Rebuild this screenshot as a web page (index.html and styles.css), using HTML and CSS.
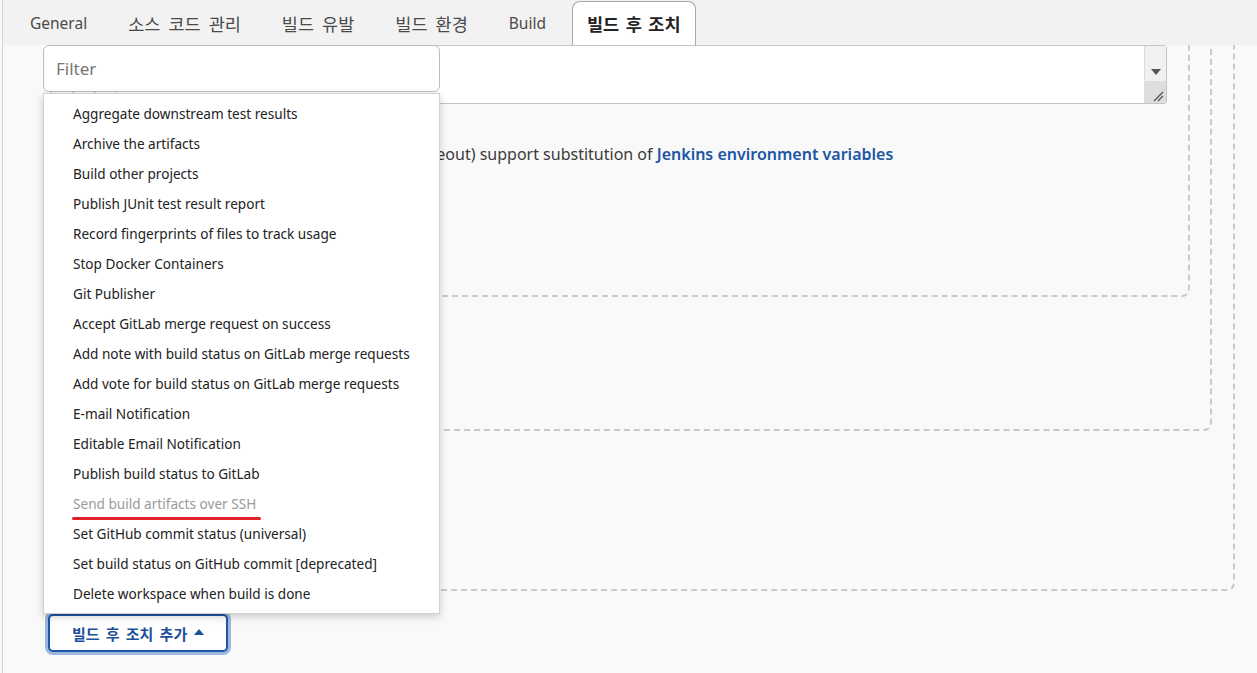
FILE: index.html
```html
<!DOCTYPE html>
<html lang="ko">
<head>
<meta charset="utf-8">
<title>Jenkins - 빌드 후 조치</title>
<link rel="stylesheet" href="styles.css">
</head>
<body>
<div class="page">
  <nav class="tabs">
    <span class="tab lat">General</span>
    <span class="tab">소스 코드 관리</span>
    <span class="tab">빌드 유발</span>
    <span class="tab">빌드 환경</span>
    <span class="tab lat">Build</span>
    <span class="tab active">빌드 후 조치</span>
  </nav>
  <main class="content">
    <div class="box outer">
      <div class="box middle">
        <div class="box inner">
          <div class="textarea">
            <div class="ta-body"></div>
            <div class="ta-scroll">
              <div class="ta-track">
                <svg class="ta-arrow" width="10" height="6" viewBox="0 0 10 6"><path d="M0 0 H10 L5 6 Z" fill="#555"/></svg>
              </div>
              <div class="ta-grip">
                <svg width="12" height="12" viewBox="0 0 12 12"><path d="M2 11 L11 2 M6 11 L11 6" stroke="#555" stroke-width="1.3" fill="none"/></svg>
              </div>
            </div>
          </div>
          <p class="help">All fields (including timeout) support substitution of <a href="#" class="link">Jenkins environment variables</a></p>
        </div>
      </div>
    </div>
    <button class="add-btn" type="button"><span class="add-label">빌드 후 조치 추가</span><svg class="caret" width="10" height="6" viewBox="0 0 10 6"><path d="M0 6 L5 0 L10 6 Z" fill="#1d4f9a"/></svg></button>

    <div class="picker">
      <div class="filter">Filter</div>
      <ul class="menu">
        <li>Aggregate downstream test results</li>
        <li>Archive the artifacts</li>
        <li>Build other projects</li>
        <li>Publish JUnit test result report</li>
        <li>Record fingerprints of files to track usage</li>
        <li>Stop Docker Containers</li>
        <li>Git Publisher</li>
        <li>Accept GitLab merge request on success</li>
        <li>Add note with build status on GitLab merge requests</li>
        <li>Add vote for build status on GitLab merge requests</li>
        <li>E-mail Notification</li>
        <li>Editable Email Notification</li>
        <li>Publish build status to GitLab</li>
        <li class="disabled"><span class="marked">Send build artifacts over SSH</span></li>
        <li>Set GitHub commit status (universal)</li>
        <li>Set build status on GitHub commit [deprecated]</li>
        <li>Delete workspace when build is done</li>
      </ul>
    </div>
  </main>
</div>
</body>
</html>
```

FILE: styles.css
```css
* { box-sizing: border-box; }
html, body { margin: 0; padding: 0; }
body {
  background: #f9f9f9;
  font-family: "Noto Sans", "Noto Sans CJK KR", sans-serif;
  color: #333;
  overflow: hidden;
}
.page {
  margin-left: 2px;
  border-left: 1px solid #d4d4d4;
  height: 673px;
  overflow: hidden;
}
.tabs {
  display: flex;
  align-items: flex-end;
  height: 45px;
  background: #f2f2f2;
  padding-left: 12px;
  gap: 11px;
}
.tab {
  display: flex;
  align-items: center;
  height: 44px;
  padding: 0 15px;
  font-size: 17.5px;
  word-spacing: 3.5px;
  color: #4a4a4a;
  font-family: "Noto Sans", "Noto Sans CJK KR", sans-serif;
}
.tab.lat {
  font-size: 15.5px;
  word-spacing: 0;
}
.tab.active {
  background: #fff;
  border: 1px solid #a8a8a8;
  border-bottom: none;
  border-radius: 8px 8px 0 0;
  font-weight: 700;
  color: #222;
  padding: 0 14px;
  word-spacing: 2px;
}
.content {
  position: relative;
  display: flow-root;
  height: 628px;
  overflow: hidden;
}
.box {
  border: 2px dashed #c9c9c9;
  border-radius: 8px;
}
.outer {
  margin: -60px 22px 0 47px;
  padding: 10px 21px 158px 20px;
}
.middle {
  padding: 10px 20px 132px 20px;
}
.inner {
  padding: 34px 21px 129px 20px;
}
.textarea {
  display: flex;
  height: 59px;
  background: #fff;
  border: 1px solid #c4c4c4;
  border-radius: 3px;
}
.ta-body { flex: 1; }
.ta-scroll {
  width: 22px;
  display: flex;
  flex-direction: column;
}
.ta-track {
  flex: 1;
  background: #f1f1f1;
  border-left: 1px solid #dcdcdc;
  display: flex;
  align-items: center;
  justify-content: center;
  padding-top: 16px;
}
.ta-grip {
  height: 22px;
  background: #dddddd;
  display: flex;
  align-items: flex-end;
  justify-content: flex-end;
  padding: 0 2px 1px 0;
}
.help {
  margin: 38px 0 0 150px;
  font-size: 16px;
  line-height: 24px;
  color: #3a3a3a;
  white-space: nowrap;
}
.link {
  color: #1d55a5;
  font-weight: 600;
  text-decoration: none;
}
.add-btn {
  margin: 23px 0 0 45px;
  width: 180px;
  height: 38px;
  background: #fff;
  border: 2px solid #1f56a5;
  border-radius: 5px;
  box-shadow: 0 0 0 3px rgba(80, 130, 200, 0.55);
  color: #1d4f9a;
  font-family: "Noto Sans CJK KR", "Noto Sans", sans-serif;
  font-weight: 700;
  font-size: 15px;
  display: flex;
  align-items: center;
  justify-content: flex-start;
  gap: 7px;
  padding: 0 0 0 22px;
}
.add-label { word-spacing: 2px; }
.caret { margin-top: -2px; }
.picker {
  position: absolute;
  left: 40px;
  top: 0;
  width: 397px;
}
.filter {
  height: 47px;
  background: #fff;
  border: 1.5px solid #bdbdbd;
  border-radius: 6px;
  padding: 0 12px;
  display: flex;
  align-items: center;
  font-size: 17px;
  color: #777;
}
.menu {
  list-style: none;
  margin: 1px 0 0 0;
  padding: 5px 0 4px 0;
  background: #fff;
  border: 1px solid #d0d0d0;
  box-shadow: 0 3px 8px rgba(0, 0, 0, 0.18);
}
.menu li {
  height: 30px;
  line-height: 30px;
  padding-left: 29px;
  font-size: 13.6px;
  color: #222;
  white-space: nowrap;
}
.menu li.disabled { color: #9a9a9a; }
.marked {
  position: relative;
  display: inline-block;
}
.marked::after {
  content: "";
  position: absolute;
  left: -1px;
  right: -5px;
  bottom: -1px;
  height: 3px;
  border-radius: 2px;
  background: #e0232b;
}
```
